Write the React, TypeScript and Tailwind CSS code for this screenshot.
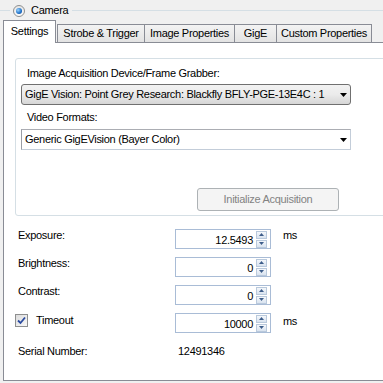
import React from "react";

function Spin() {
  return (
    <div className="flex flex-col w-[11px] h-[17px] mr-[3px] gap-[1px]">
      <div className="flex-1 flex items-center justify-center border border-[#b9c9dc] bg-gradient-to-b from-[#f4f7fb] to-[#d9e3ef]">
        <svg width="5" height="3" viewBox="0 0 5 3"><path d="M0 3 L2.5 0 L5 3 Z" fill="#3d5d8a" /></svg>
      </div>
      <div className="flex-1 flex items-center justify-center border border-[#b9c9dc] bg-gradient-to-b from-[#f4f7fb] to-[#d9e3ef]">
        <svg width="5" height="3" viewBox="0 0 5 3"><path d="M0 0 L5 0 L2.5 3 Z" fill="#3d5d8a" /></svg>
      </div>
    </div>
  );
}

function NumBox({ value }: { value: string }) {
  return (
    <div className="w-[96px] h-[20px] border border-[#a9bcd6] bg-white flex items-center">
      <div className="flex-1 text-right pr-[3px] pt-[2px] leading-[13px]">{value}</div>
      <Spin />
    </div>
  );
}

function Arrow() {
  return (
    <svg width="7" height="4" viewBox="0 0 7 4" className="shrink-0">
      <path d="M0 0 L7 0 L3.5 4 Z" fill="#000" />
    </svg>
  );
}

export default function App() {
  return (
    <div className="w-[383px] h-[383px] overflow-hidden bg-[#f0f0f0] text-[11px] text-black font-['Liberation_Sans',Arial,sans-serif] tracking-[-0.3px] leading-[13px]">
      {/* header */}
      <div className="flex items-center h-[21px]">
        <div className="w-[10px] h-px bg-[#d5dfe5] mr-[3px]" />
        <div className="w-[12px] h-[12px] rounded-full border border-[#8e8f8f] bg-gradient-to-b from-[#e6e6e6] to-[#fbfbfb] flex items-center justify-center">
          <div className="w-[6px] h-[6px] rounded-full bg-[radial-gradient(circle_at_35%_35%,#9ad4ff,#1d6fc6_60%,#0d3f8a)]" />
        </div>
        <span className="ml-[6px]">Camera</span>
        <div className="flex-1 h-px bg-[#d5dfe5] ml-[4px]" />
      </div>

      {/* tabs */}
      <div className="flex items-end h-[21px] pl-[3px]">
        <div className="relative z-10 w-[53px] h-[23px] -mb-[1px] border border-b-0 border-[#898c95] bg-white flex items-start justify-center pt-[4px]">
          Settings
        </div>
        <div className="w-[88px] h-[18px] ml-[1px] border border-b-0 border-[#898c95] bg-gradient-to-b from-[#f3f3f3] to-[#e3e3e3] flex items-center justify-center">
          Strobe &amp; Trigger
        </div>
        <div className="w-[91px] h-[18px] -ml-px border border-b-0 border-[#898c95] bg-gradient-to-b from-[#f3f3f3] to-[#e3e3e3] flex items-center justify-center">
          Image Properties
        </div>
        <div className="w-[43px] h-[18px] -ml-px border border-b-0 border-[#898c95] bg-gradient-to-b from-[#f3f3f3] to-[#e3e3e3] flex items-center justify-center">
          GigE
        </div>
        <div className="w-[96px] h-[18px] -ml-px border border-b-0 border-[#898c95] bg-gradient-to-b from-[#f3f3f3] to-[#e3e3e3] flex items-center justify-center">
          Custom Properties
        </div>
      </div>

      {/* panel */}
      <div className="ml-[3px] w-[400px] h-[339px] border border-[#898c95] bg-white flex flex-col">
        {/* group box */}
        <div className="ml-[11px] mt-[15px] w-[390px] h-[158px] border border-[#d5dfe5] rounded-[3px] flex flex-col">
          <div className="ml-[11px] mt-[8px]">Image Acquisition Device/Frame Grabber:</div>
          <div className="ml-[5px] mt-[4px] w-[330px] h-[21px] border border-[#707070] rounded-[3px] bg-gradient-to-b from-[#f2f2f2] via-[#ebebeb] to-[#d6d6d6] flex items-center pl-[3px] pr-[3px]">
            <span className="flex-1 whitespace-nowrap overflow-hidden">GigE Vision: Point Grey Research: Blackfly BFLY-PGE-13E4C : 1</span>
            <Arrow />
          </div>
          <div className="ml-[11px] mt-[6px]">Video Formats:</div>
          <div className="ml-[5px] mt-[5px] w-[330px] h-[21px] border border-[#c3cdd9] border-t-[#abadb3] border-l-[#9a9ea6] bg-white flex items-center pl-[3px] pr-[3px]">
            <span className="flex-1 whitespace-nowrap overflow-hidden">Generic GigEVision (Bayer Color)</span>
            <Arrow />
          </div>
          <div className="ml-[181px] mt-[38px] w-[142px] h-[23px] border border-[#adb2b5] rounded-[3px] bg-[#f4f4f4] text-[#838383] flex items-center justify-center">
            Initialize Acquisition
          </div>
        </div>

        {/* rows */}
        <div className="flex flex-col gap-[8px] mt-[13px]">
          <div className="flex items-start h-[20px]">
            <div className="w-[171px] pl-[14px]">Exposure:</div>
            <NumBox value="12.5493" />
            <div className="ml-[12px]">ms</div>
          </div>
          <div className="flex items-start h-[20px]">
            <div className="w-[171px] pl-[14px]">Brightness:</div>
            <NumBox value="0" />
          </div>
          <div className="flex items-start h-[20px]">
            <div className="w-[171px] pl-[14px]">Contrast:</div>
            <NumBox value="0" />
          </div>
          <div className="flex items-start h-[20px]">
            <div className="w-[171px] pl-[11px] flex items-center pt-[1px]">
              <div className="w-[13px] h-[13px] border border-[#8e8f8f] bg-gradient-to-br from-[#dcdcdc] to-[#f8f8f8] flex items-center justify-center">
                <svg width="9" height="9" viewBox="0 0 9 9">
                  <path d="M1 4.5 L3.5 7 L8 1.5" stroke="#2a4aa0" strokeWidth="1.8" fill="none" />
                </svg>
              </div>
              <span className="ml-[8px]">Timeout</span>
            </div>
            <NumBox value="10000" />
            <div className="ml-[12px] pt-[2px]">ms</div>
          </div>
        </div>
        <div className="flex mt-[12px]">
          <div className="w-[174px] pl-[14px]">Serial Number:</div>
          <div>12491346</div>
        </div>
      </div>
    </div>
  );
}
